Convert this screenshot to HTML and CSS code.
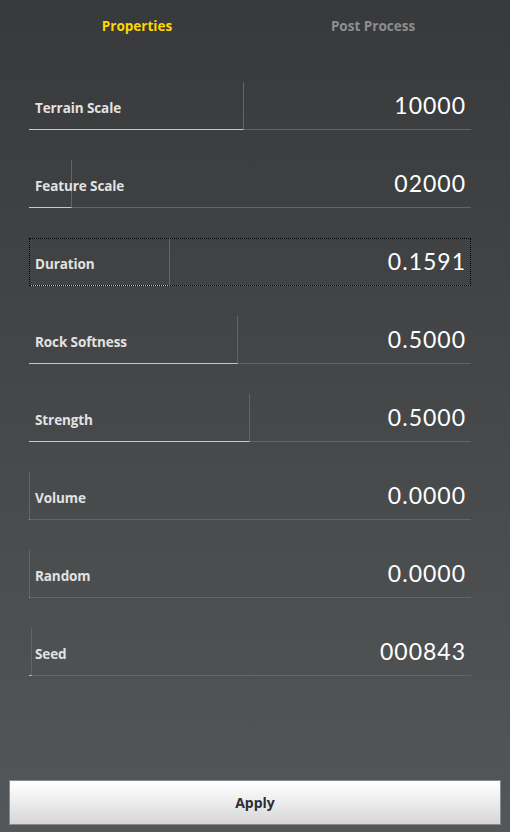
FILE: index.html
```html
<!DOCTYPE html>
<html>
<head>
<meta charset="utf-8">
<link rel="stylesheet" href="styles.css">
</head>
<body>
<div class="panel">
  <div class="tabs">
    <div class="tab active">Properties</div>
    <div class="tab">Post Process</div>
  </div>
  <div class="rows">
    <div class="row">
      <div class="track"><div class="fill" style="width:214px"></div><div class="rest"></div></div>
      <div class="content"><span class="label">Terrain Scale</span><span class="value">10000</span></div>
    </div>
    <div class="row">
      <div class="track"><div class="fill" style="width:42px"></div><div class="rest"></div></div>
      <div class="content"><span class="label">Feature Scale</span><span class="value">02000</span></div>
    </div>
    <div class="row focused">
      <div class="track"><div class="fill" style="width:140px"></div><div class="rest"></div></div>
      <div class="content"><span class="label">Duration</span><span class="value">0.1591</span></div>
    </div>
    <div class="row">
      <div class="track"><div class="fill" style="width:208px"></div><div class="rest"></div></div>
      <div class="content"><span class="label">Rock Softness</span><span class="value">0.5000</span></div>
    </div>
    <div class="row">
      <div class="track"><div class="fill" style="width:220px"></div><div class="rest"></div></div>
      <div class="content"><span class="label">Strength</span><span class="value">0.5000</span></div>
    </div>
    <div class="row">
      <div class="track"><div class="fill" style="width:0px"></div><div class="rest"></div></div>
      <div class="content"><span class="label">Volume</span><span class="value">0.0000</span></div>
    </div>
    <div class="row">
      <div class="track"><div class="fill" style="width:0px"></div><div class="rest"></div></div>
      <div class="content"><span class="label">Random</span><span class="value">0.0000</span></div>
    </div>
    <div class="row">
      <div class="track"><div class="fill" style="width:2px"></div><div class="rest"></div></div>
      <div class="content"><span class="label">Seed</span><span class="value">000843</span></div>
    </div>
  </div>
  <div class="footer">
    <button class="apply">Apply</button>
  </div>
</div>
</body>
</html>
```

FILE: styles.css
```css
html, body {
  margin: 0;
  padding: 0;
  height: 100%;
}
body {
  background: linear-gradient(to bottom, #38393a 0%, #444647 45%, #545759 100%);
  font-family: "Open Sans", "Liberation Sans", sans-serif;
}
.panel {
  display: flex;
  flex-direction: column;
  height: 832px;
}
.tabs {
  display: flex;
  padding: 0 19px;
  height: 52px;
}
.tab {
  flex: 1;
  text-align: center;
  font-weight: 700;
  font-size: 13.5px;
  color: #8e8e8e;
  line-height: 52px;
}
.tab.active {
  color: #ffd700;
}
.rows {
  display: flex;
  flex-direction: column;
  gap: 30px;
  padding: 30px 39px 0 29px;
}
.row {
  display: grid;
  height: 48px;
}
.row > * {
  grid-area: 1 / 1;
}
.row.focused {
  outline: 1px dotted #000;
  outline-offset: -1px;
}
.track {
  display: flex;
}
.fill {
  height: 47px;
  border-bottom: 1px solid #f2d21a;
  border-right: 1px solid #6a6843;
  flex: none;
}
.rest {
  flex: 1;
  height: 47px;
  border-bottom: 1px solid #6a6843;
}
.content {
  display: flex;
  justify-content: space-between;
  align-items: center;
  padding: 0 6px 0 6px;
}
.label {
  font-weight: 700;
  font-size: 13.5px;
  color: #e2e2e2;
  letter-spacing: -0.1px;
  margin-top: 4px;
}
.value {
  font-family: Lato, "DejaVu Sans", sans-serif;
  font-weight: 400;
  font-size: 23px;
  letter-spacing: 1px;
  margin-right: -1px;
  color: #ffffff;
  margin-top: -2px;
}
.footer {
  margin-top: auto;
  padding: 0 9px 7px 9px;
}
.apply {
  display: block;
  width: 100%;
  height: 45px;
  border: 1px solid #8a8a8a;
  background: linear-gradient(to bottom, #ffffff 0%, #f0f0f0 40%, #d6d6d6 100%);
  font-family: "Open Sans", "Liberation Sans", sans-serif;
  font-weight: 700;
  font-size: 14px;
  color: #2c2c34;
  padding: 0;
}
```
